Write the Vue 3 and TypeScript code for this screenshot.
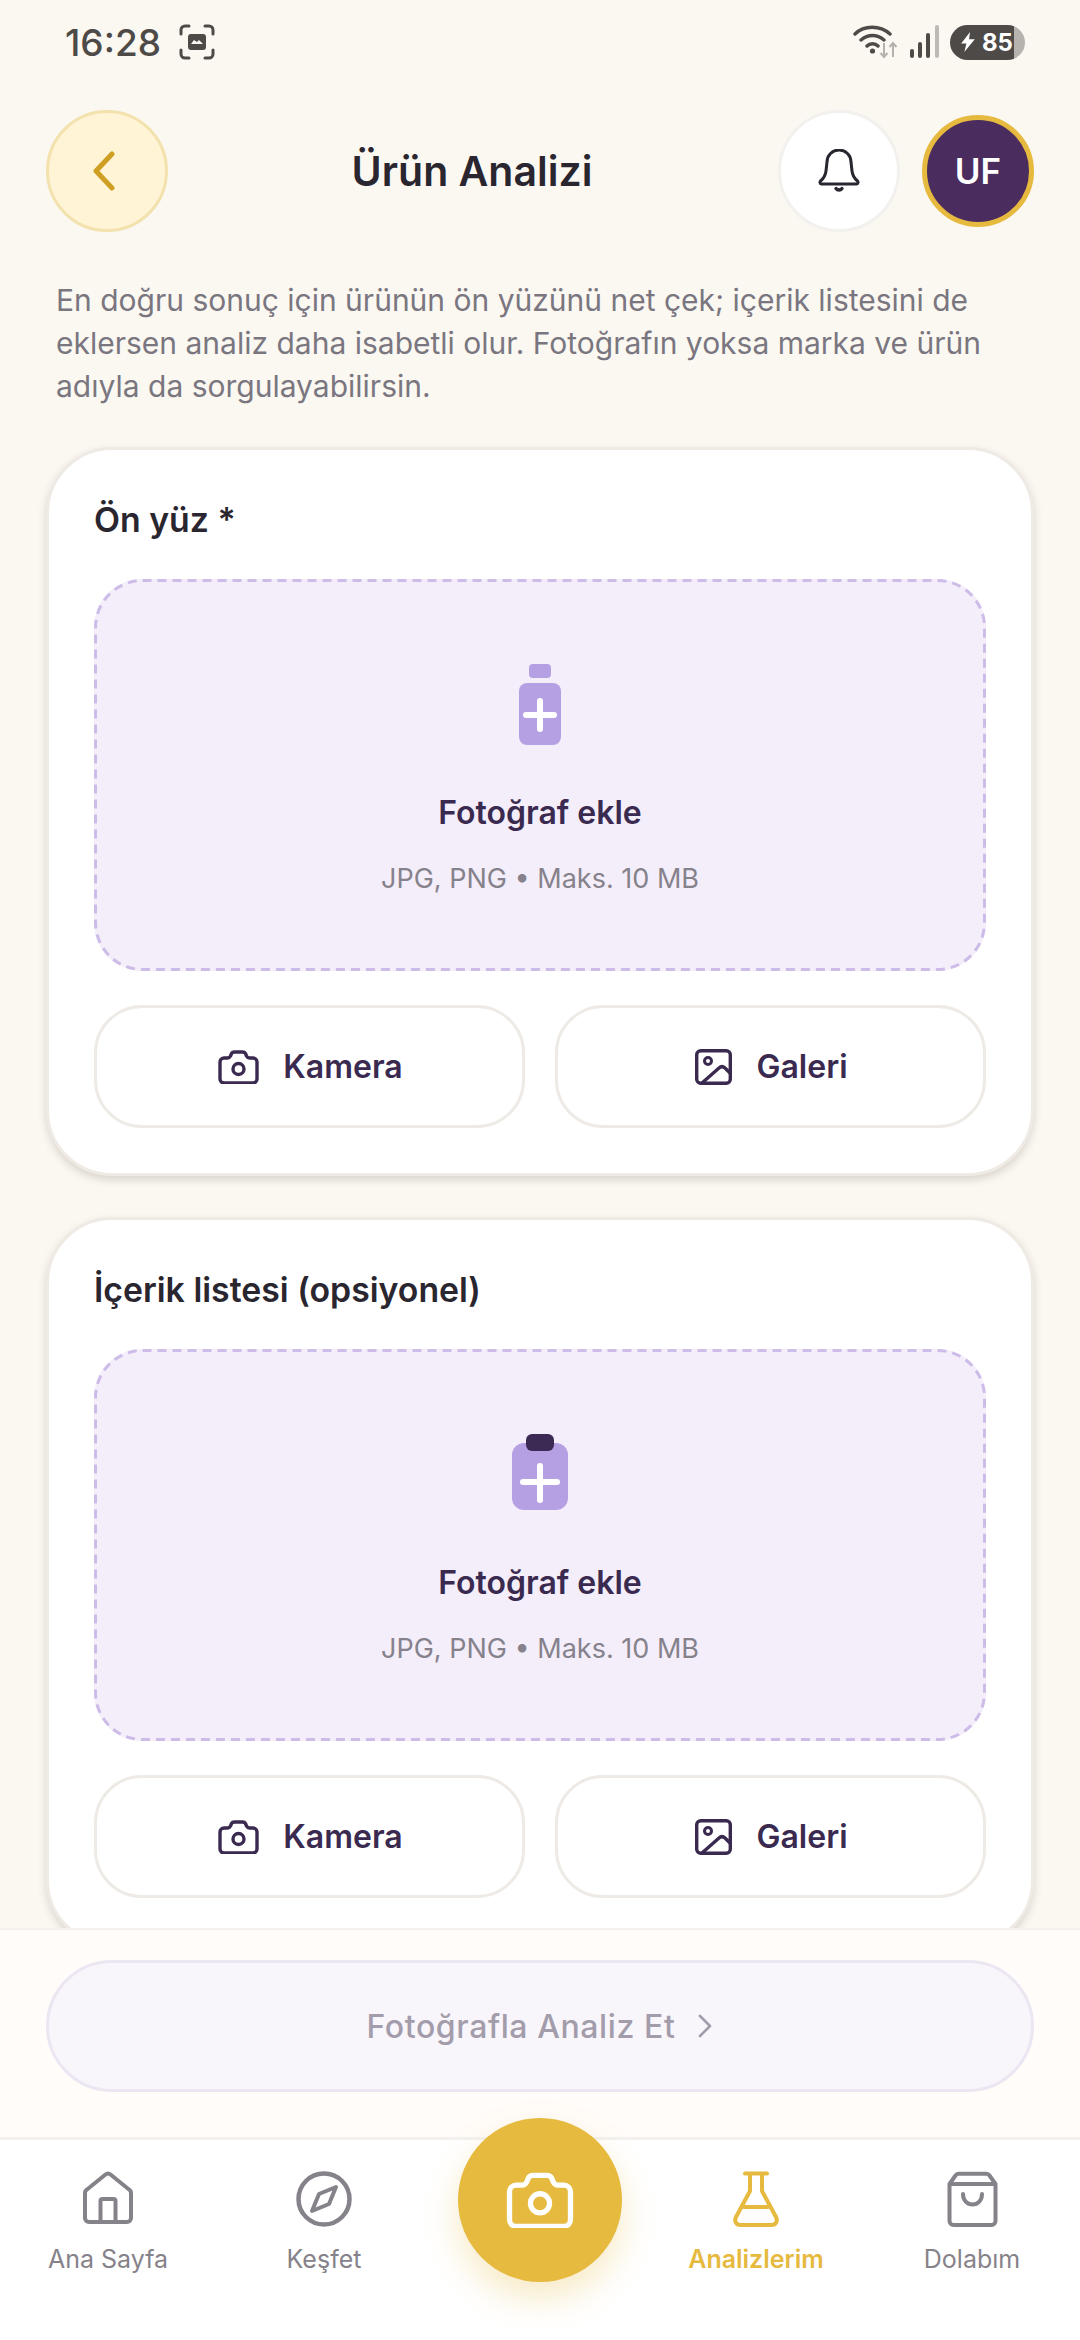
<script setup lang="ts">
const uploads = [
  { title: 'Ön yüz *', clip: false },
  { title: 'İçerik listesi (opsiyonel)', clip: true },
]

const navLeft = ['Ana Sayfa', 'Keşfet']

const cameraPath =
  'M6 8h3.5c1.5 0 2.5-1 3-2l1-2.5c.5-1 1.5-1.5 3-1.5h8c1.5 0 2.5.5 3 1.5l1 2.5c.5 1 1.5 2 3 2H35a4 4 0 0 1 4 4v17a4 4 0 0 1-4 4H6a4 4 0 0 1-4-4V12a4 4 0 0 1 4-4z'
</script>

<template>
  <div class="page">
    <div class="status">
      <div class="status-left">
        <span class="time">16:28</span>
        <svg class="shot" width="36" height="36" viewBox="0 0 36 36" fill="none">
          <path d="M2 10V6a4 4 0 0 1 4-4h4M26 2h4a4 4 0 0 1 4 4v4M34 26v4a4 4 0 0 1-4 4h-4M10 34H6a4 4 0 0 1-4-4v-4" stroke="#4d4a47" stroke-width="3" stroke-linecap="round" />
          <rect x="9" y="10" width="18" height="16" rx="3" fill="#4d4a47" />
          <path d="M12 20l3-4 3 2 2-2 4 4z" fill="#fbf8f2" />
        </svg>
      </div>
      <div class="status-right">
        <svg class="wifi" width="46" height="34" viewBox="0 0 46 34" fill="none">
          <path d="M2 9C11 0 27 0 37 9M8 15c7-6 16-6 23 0M14 21c3-3 8-3 11 0" stroke="#4d4a47" stroke-width="3.4" stroke-linecap="round" />
          <circle cx="19.500" cy="26" r="2.600" fill="#4d4a47" />
          <path d="M31 18v14M27.500 28l3.500 4 3.500-4M40 32V18M36.500 22l3.500-4 3.500 4" stroke="#b5b2ad" stroke-width="2" fill="none" />
        </svg>
        <svg width="30" height="34" viewBox="0 0 30 34">
          <rect x="0" y="24" width="4" height="9" rx="2" fill="#4d4a47" />
          <rect x="8" y="17" width="4" height="16" rx="2" fill="#4d4a47" />
          <rect x="16" y="8" width="4" height="25" rx="2" fill="#4d4a47" />
          <rect x="25" y="0" width="4" height="33" rx="2" fill="#bdbab5" />
        </svg>
        <div class="battery">
          <svg width="15" height="20" viewBox="0 0 14 19"><path d="M8.500 0L0 11h5l-2 8 10-12H7.500z" fill="#fff" /></svg>
          <span>85</span>
        </div>
      </div>
    </div>

    <header class="head">
      <button class="back">
        <svg width="30" height="40" viewBox="0 0 30 40" fill="none"><path d="M23 3L7 20l16 17" stroke="#cf9f24" stroke-width="5" stroke-linecap="round" stroke-linejoin="round" /></svg>
      </button>
      <h1>Ürün Analizi</h1>
      <button class="bell">
        <svg width="44" height="44" viewBox="0 0 44 44" fill="none">
          <path d="M3.500 32c3-2.500 5-5.500 5.500-10l1-9a12 12 0 0 1 24 0l1 9c.5 4.500 2.500 7.500 5.500 10 1 1 .5 3-1 3H4.500c-1.500 0-2-2-1-3z" stroke="#2a2630" stroke-width="3" stroke-linejoin="round" />
          <path d="M19 39.500c1.500 2 4.500 2 6 0" stroke="#2a2630" stroke-width="3.400" stroke-linecap="round" />
        </svg>
      </button>
      <div class="avatar">UF</div>
    </header>

    <main class="scroll">
      <p class="hint">En doğru sonuç için ürünün ön yüzünü net çek; içerik listesini de eklersen analiz daha isabetli olur. Fotoğrafın yoksa marka ve ürün adıyla da sorgulayabilirsin.</p>

      <section v-for="u in uploads" :key="u.title" class="card">
        <h2>{{ u.title }}</h2>
        <div class="drop">
          <svg class="dash" width="892" height="392" fill="none">
            <rect x="1.500" y="1.500" width="889" height="389" rx="47" stroke="#cdbce8" stroke-width="3" stroke-dasharray="9 6" />
          </svg>
          <svg class="drop-icon" width="80" height="84" viewBox="0 0 80 84">
            <template v-if="u.clip">
              <rect x="12" y="9" width="56" height="67" rx="12" fill="#b5a0e3" />
              <rect x="26" y="0" width="28" height="17" rx="6" fill="#3d2a54" />
              <path d="M40 32v34M23 48h34" stroke="#fff" stroke-width="6" stroke-linecap="round" />
            </template>
            <template v-else>
              <rect x="29" y="0" width="22" height="14" rx="4" fill="#b5a0e3" />
              <rect x="19" y="19" width="42" height="62" rx="8" fill="#b5a0e3" />
              <path d="M40 37v28M26 51h28" stroke="#fff" stroke-width="6" stroke-linecap="round" />
            </template>
          </svg>
          <div class="drop-title">Fotoğraf ekle</div>
          <div class="drop-sub">JPG, PNG • Maks. 10 MB</div>
        </div>
        <div class="actions">
          <button class="action">
            <svg width="41" height="34" viewBox="0 0 41 34" fill="none">
              <path :d="cameraPath" stroke="#3a2a50" stroke-width="3.400" stroke-linejoin="round" />
              <circle cx="20.500" cy="19" r="5.500" stroke="#3a2a50" stroke-width="3.400" />
            </svg>
            Kamera
          </button>
          <button class="action">
            <svg width="37" height="36" viewBox="0 0 37 36" fill="none">
              <rect x="1.700" y="1.700" width="33.600" height="32.600" rx="4" stroke="#3a2a50" stroke-width="3.400" />
              <circle cx="13" cy="12" r="3.500" stroke="#3a2a50" stroke-width="3" />
              <path d="M7 34l17-15c2-1.800 4-1.800 6 0l6 6" stroke="#3a2a50" stroke-width="3.400" stroke-linejoin="round" />
            </svg>
            Galeri
          </button>
        </div>
      </section>
    </main>

    <div class="footer">
      <button class="submit">
        Fotoğrafla Analiz Et
        <svg width="16" height="24" viewBox="0 0 16 24" fill="none"><path d="M3 2l10 10L3 22" stroke="#a39cab" stroke-width="2.600" stroke-linecap="round" stroke-linejoin="round" /></svg>
      </button>
    </div>

    <nav class="nav">
      <div class="nav-item">
        <svg width="50" height="56" viewBox="0 0 50 56" fill="none">
          <path d="M22.500 3.500a4 4 0 0 1 5 0L46 18.500a4 4 0 0 1 2 3.500V47a4 4 0 0 1-4 4H6a4 4 0 0 1-4-4V22a4 4 0 0 1 2-3.500z" stroke="#86828a" stroke-width="4" stroke-linejoin="round" />
          <path d="M17.500 51V30a2 2 0 0 1 2-2h11a2 2 0 0 1 2 2v21" stroke="#86828a" stroke-width="4" />
        </svg>
        <span>{{ navLeft[0] }}</span>
      </div>
      <div class="nav-item">
        <svg width="56" height="56" viewBox="0 0 56 56" fill="none">
          <circle cx="28" cy="28" r="25.500" stroke="#86828a" stroke-width="4.500" />
          <path d="M40 16l-17 7-7 17 17-7z" stroke="#86828a" stroke-width="4" stroke-linejoin="round" />
        </svg>
        <span>{{ navLeft[1] }}</span>
      </div>
      <div class="nav-item"></div>
      <div class="nav-item active">
        <svg width="46" height="56" viewBox="0 0 46 56" fill="none">
          <path d="M12 2.500h22M17 2.500V20L3 46c-2 4 0 8 4.500 8h31c4.500 0 6.500-4 4.500-8L29 20V2.500M11 36h24" stroke="#e6b93f" stroke-width="4" stroke-linecap="round" stroke-linejoin="round" />
        </svg>
        <span>Analizlerim</span>
      </div>
      <div class="nav-item">
        <svg width="51" height="56" viewBox="0 0 51 56" fill="none">
          <path d="M2.500 13l6-8.500a4 4 0 0 1 3-1.700h28a4 4 0 0 1 3 1.700l6 8.500v37a4 4 0 0 1-4 4h-38a4 4 0 0 1-4-4z" stroke="#86828a" stroke-width="4" stroke-linejoin="round" />
          <path d="M2.500 13h46" stroke="#86828a" stroke-width="4" />
          <path d="M16 23c0 14 19 14 19 0" stroke="#86828a" stroke-width="4" stroke-linecap="round" />
        </svg>
        <span>Dolabım</span>
      </div>
      <button class="fab">
        <svg width="68" height="56" viewBox="0 0 41 34" fill="none">
          <path :d="cameraPath" stroke="#fff" stroke-width="3.200" stroke-linejoin="round" />
          <circle cx="20.500" cy="19" r="5.800" stroke="#fff" stroke-width="3.200" />
        </svg>
      </button>
    </nav>
  </div>
</template>

<style>
html, body {
  margin: 0;
  background: #fbf8f2;
}
</style>

<style scoped>
* {
  box-sizing: border-box;
}

.page {
  width: 1080px;
  height: 2340px;
  display: flex;
  flex-direction: column;
  overflow: hidden;
  background: #fbf8f2;
  font-family: Inter, "Noto Sans", sans-serif;
}

button {
  font-family: inherit;
  padding: 0;
  cursor: pointer;
}

.status {
  height: 110px;
  flex: none;
  display: flex;
  justify-content: space-between;
  align-items: flex-start;
  padding: 24px 55px 0 65px;
}

.status-left {
  display: flex;
  align-items: center;
  gap: 18px;
  height: 36px;
}

.time {
  font-size: 37px;
  font-weight: 500;
  color: #4d4a47;
}

.status-right {
  display: flex;
  align-items: center;
  gap: 10px;
  height: 36px;
}

.wifi {
  margin-right: 1px;
}

.battery {
  width: 75px;
  height: 35px;
  border-radius: 18px;
  display: flex;
  align-items: center;
  gap: 6px;
  padding-left: 11px;
  color: #fff;
  font-size: 24px;
  font-weight: 700;
  background: linear-gradient(90deg, #4d4a47 0 64px, #b6b3ae 64px);
}

.head {
  flex: none;
  height: 122px;
  display: flex;
  align-items: center;
  padding: 0 46px;
}

.back {
  width: 122px;
  height: 122px;
  border-radius: 50%;
  background: #fff4d6;
  border: 3px solid #f3e2ae;
  display: flex;
  align-items: center;
  justify-content: center;
}

.back svg {
  margin-right: 6px;
}

.head h1 {
  flex: 1;
  margin: 0;
  padding-right: 2px;
  text-align: center;
  font-size: 41px;
  font-weight: 600;
  color: #2a2630;
}

.bell {
  width: 122px;
  height: 122px;
  border-radius: 50%;
  background: #fff;
  border: 3px solid #f3f1ee;
  display: flex;
  align-items: center;
  justify-content: center;
  margin-right: 22px;
}

.avatar {
  width: 112px;
  height: 112px;
  border-radius: 50%;
  background: #4b2c5e;
  border: 5px solid #e6b93f;
  color: #fff;
  font-size: 35px;
  font-weight: 600;
  display: flex;
  align-items: center;
  justify-content: center;
}

.scroll {
  flex: 1;
  min-height: 0;
  overflow: hidden;
  padding: 47px 46px 0;
  display: flex;
  flex-direction: column;
  gap: 41px;
}

.hint {
  margin: 0 0 -2px;
  padding: 0 10px;
  font-size: 30px;
  line-height: 43px;
  color: #7a7680;
}

.card {
  flex: none;
  height: 729px;
  background: #fff;
  border: 3px solid #efebe4;
  border-radius: 66px;
  padding: 45px;
  box-shadow: 0 4px 8px rgba(60, 50, 40, 0.18);
}

.card h2 {
  margin: 4px 0 38px;
  height: 42px;
  line-height: 42px;
  font-size: 33.8px;
  font-weight: 600;
  color: #2a2630;
}

.drop {
  position: relative;
  height: 392px;
  border-radius: 48px;
  background: #f4eefa;
  display: flex;
  flex-direction: column;
  align-items: center;
  padding-top: 85px;
}

.dash {
  position: absolute;
  top: 0;
  left: 0;
}

.drop-icon {
  margin-bottom: 45px;
}

.drop-title {
  font-size: 32px;
  font-weight: 600;
  color: #3a2a50;
  line-height: 40px;
}

.drop-sub {
  margin-top: 27px;
  font-size: 27px;
  line-height: 38px;
  color: #86828c;
}

.actions {
  display: grid;
  grid-template-columns: 1fr 1fr;
  gap: 30px;
  margin-top: 34px;
}

.action {
  height: 123px;
  border-radius: 48px;
  background: #fff;
  border: 3px solid #eeeae6;
  display: flex;
  align-items: center;
  justify-content: center;
  gap: 24px;
  padding-left: 2px;
  font-size: 32px;
  font-weight: 600;
  color: #3a2a50;
}

.footer {
  flex: none;
  height: 209px;
  padding: 30px 46px 0;
  background: #fffcf9;
  border-top: 2px solid #f5f2ee;
}

.submit {
  width: 100%;
  height: 132px;
  border-radius: 66px;
  background: #f8f5fb;
  border: 3px solid #ece6f2;
  color: #a39cab;
  font-size: 32px;
  font-weight: 500;
  letter-spacing: 0.6px;
  display: flex;
  align-items: center;
  justify-content: center;
  gap: 22px;
}

.nav {
  flex: none;
  height: 203px;
  position: relative;
  display: grid;
  grid-template-columns: repeat(5, 1fr);
  background: #fff;
  border-top: 3px solid #f3f1ef;
  padding-top: 31px;
}

.nav-item {
  display: flex;
  flex-direction: column;
  align-items: center;
  gap: 16px;
  font-size: 25px;
  line-height: 32px;
  color: #86828a;
}

.nav-item.active {
  color: #e6b93f;
  font-weight: 600;
}

.fab {
  position: absolute;
  left: 458px;
  top: -22px;
  width: 164px;
  height: 164px;
  border-radius: 50%;
  border: none;
  background: #e6b93f;
  box-shadow: 0 16px 34px rgba(230, 185, 63, 0.3);
  display: flex;
  align-items: center;
  justify-content: center;
}
</style>
